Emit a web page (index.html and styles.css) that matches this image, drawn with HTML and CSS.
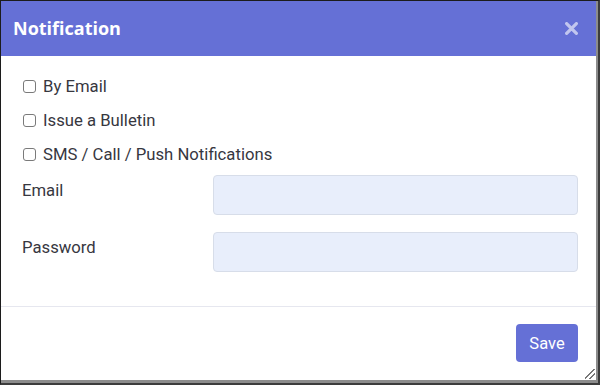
FILE: index.html
```html
<!DOCTYPE html>
<html>

<head>
    <title>Notification</title>
    <meta name="viewport" content="width=device-width, initial-scale=1.0">
    <link rel="stylesheet" href="styles.css">
</head>

<body>
    <div class="window">
        <div class="dialog">
            <div class="dialog-header">
                <div class="dialog-title">Notification</div>
                <button class="close-button" type="button">
                    <svg xmlns="http://www.w3.org/2000/svg" viewBox="0 0 12 12">
                        <path d="M1.5 1.5l9 9M10.5 1.5l-9 9" />
                    </svg>
                </button>
            </div>

            <form class="dialog-body">
                <label class="check-row">
                    <input type="checkbox" name="email">
                    <span>By Email</span>
                </label>
                <label class="check-row">
                    <input type="checkbox" name="bulletin">
                    <span>Issue a Bulletin</span>
                </label>
                <label class="check-row">
                    <input type="checkbox" name="sms">
                    <span>SMS / Call / Push Notifications</span>
                </label>

                <div class="field-row">
                    <label class="field-label" for="email-input">Email</label>
                    <input id="email-input" class="field-input" type="text">
                </div>
                <div class="field-row">
                    <label class="field-label" for="password-input">Password</label>
                    <input id="password-input" class="field-input" type="password">
                </div>
            </form>

            <div class="dialog-footer">
                <button type="button" class="save-button">Save</button>
            </div>

            <div class="resize-grip"></div>
        </div>
    </div>
</body>

</html>
```

FILE: styles.css
```css
:root {
    --accent-color: #6570d6;
    --text-color: #37373f;
    --input-bg: #e8eefb;
    --input-border: #d7dde9;
    --line-color: #e6e7ef;
}

* {
    box-sizing: border-box;
}

body {
    margin: 0;
    font-family: Roboto, 'Noto Sans', sans-serif;
    background: #fff;
}

.window {
    width: 600px;
    height: 385px;
    border-top: 1px solid #1c1c1c;
    border-left: 1px solid #1c1c1c;
    border-right: 2px solid #3c3c3c;
    border-bottom: 2px solid #3c3c3c;
}

.dialog {
    position: relative;
    height: 100%;
    display: flex;
    flex-direction: column;
    background: #fff;
    border-right: 2px solid #8c8c8c;
    border-bottom: 3px solid #8c8c8c;
}

.dialog-header {
    height: 55px;
    flex-shrink: 0;
    background: var(--accent-color);
    display: flex;
    align-items: center;
    justify-content: space-between;
    padding: 0 18px 0 12px;
}

.dialog-title {
    font-family: 'Open Sans', sans-serif;
    font-weight: 700;
    font-size: 18px;
    color: #fff;
    margin-top: -2px;
}

.close-button {
    background: none;
    border: none;
    padding: 0;
    width: 13px;
    height: 13px;
    display: flex;
    cursor: pointer;
    margin-top: -1px;
}

.close-button svg {
    width: 13px;
    height: 13px;
    stroke: rgba(255, 255, 255, 0.6);
    stroke-width: 3;
    stroke-linecap: round;
}

.dialog-body {
    flex: 1;
    margin: 0;
    padding: 13px 18px 33px 21px;
    display: flex;
    flex-direction: column;
    border-bottom: 1px solid var(--line-color);
}

.check-row {
    display: flex;
    align-items: center;
    gap: 7px;
    height: 34px;
    font-size: 16.7px;
    color: var(--text-color);
    padding-left: 1px;
}

.check-row input {
    appearance: none;
    -webkit-appearance: none;
    width: 13px;
    height: 13px;
    margin: 0;
    border: 1px solid #7a7a7a;
    border-radius: 3px;
    background: #fff;
}

.field-row {
    display: flex;
    align-items: flex-start;
    margin-top: 17px;
}

.check-row + .field-row {
    margin-top: 4px;
}

.field-label {
    width: 191px;
    flex-shrink: 0;
    font-size: 16.7px;
    color: var(--text-color);
    padding-top: 6px;
}

.field-input {
    flex: 1;
    height: 40px;
    background: var(--input-bg);
    border: 1px solid var(--input-border);
    border-radius: 4px;
    outline: none;
}

.dialog-footer {
    height: 73px;
    flex-shrink: 0;
    display: flex;
    justify-content: flex-end;
    align-items: flex-start;
    padding: 17px 18px 0 0;
}

.save-button {
    width: 62px;
    height: 38px;
    background: var(--accent-color);
    color: #fff;
    border: none;
    border-radius: 4px;
    font-family: Roboto, sans-serif;
    font-size: 16.5px;
    cursor: pointer;
}

/* corner grip over the bottom-right edge */
.resize-grip {
    position: absolute;
    right: 1px;
    bottom: 1px;
    width: 10px;
    height: 10px;
    background: linear-gradient(135deg,
            transparent 0 45%, #777 45% 52%, transparent 52% 70%, #777 70% 78%, transparent 78%);
}
```
